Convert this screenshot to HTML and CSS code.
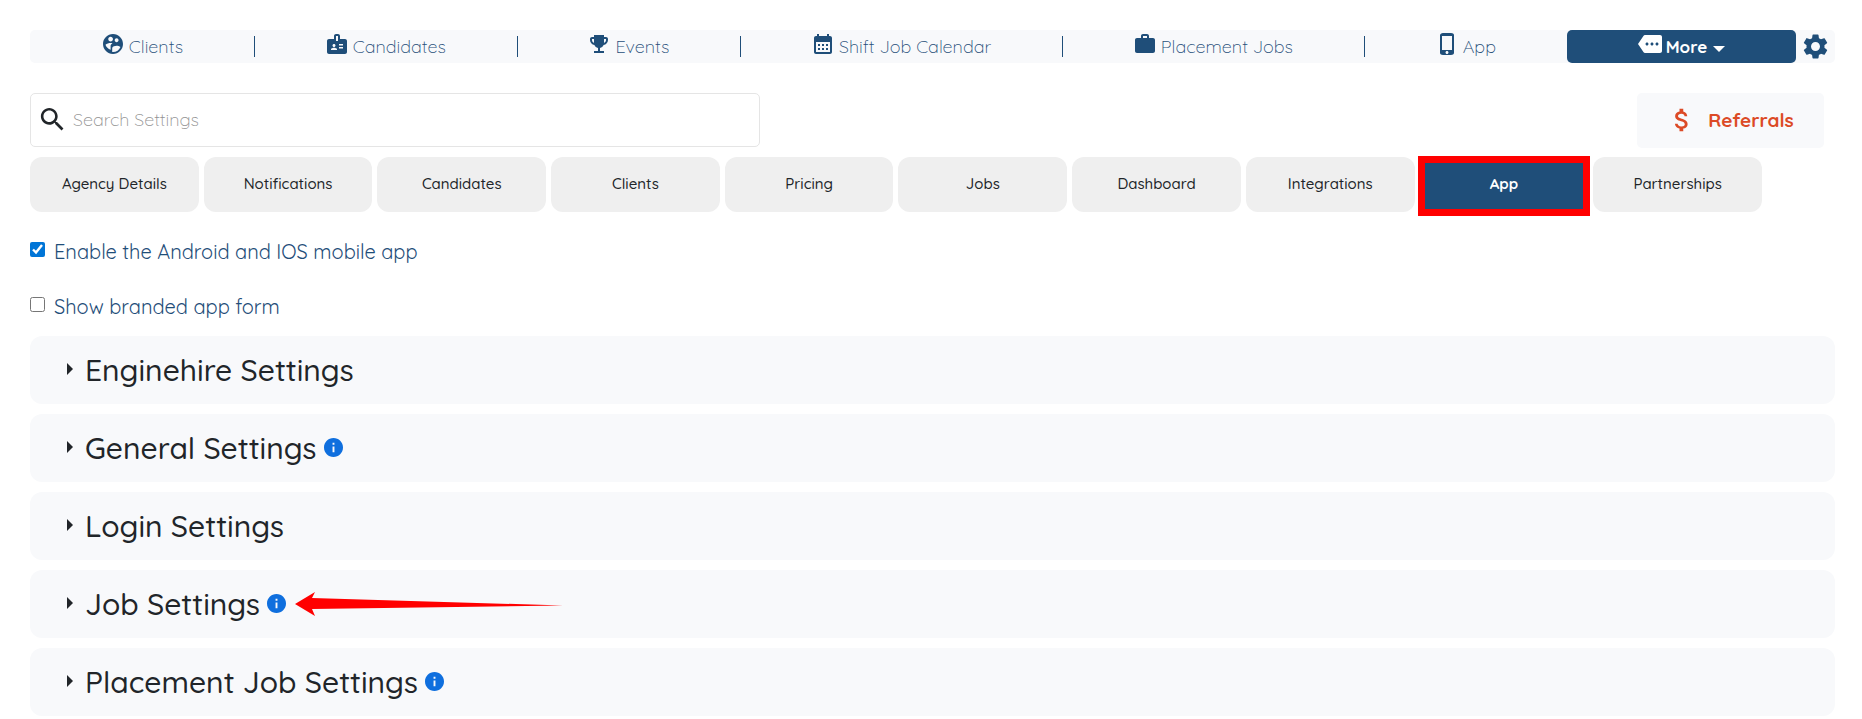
FILE: index.html
```html
<!DOCTYPE html>
<html lang="en">
<head>
<meta charset="utf-8">
<title>Settings</title>
<link rel="stylesheet" href="styles.css">
</head>
<body>

<nav class="navbar">
  <a class="nav-item" href="#clients">
    <svg class="icon" viewBox="0 0 24 24"><path d="M12 2C6.480 2 2 6.480 2 12s4.480 10 10 10 10-4.480 10-10S17.520 2 12 2zm3.610 4.340c1.070 0 1.930.86 1.930 1.930 0 1.070-.86 1.930-1.930 1.930-1.070 0-1.930-.86-1.930-1.930-.01-1.070.86-1.930 1.930-1.930zm-6-1.580c1.300 0 2.360 1.060 2.360 2.360 0 1.300-1.060 2.360-2.360 2.360s-2.360-1.060-2.360-2.360c0-1.310 1.050-2.360 2.360-2.360zm0 9.130v3.750c-2.400-.75-4.300-2.600-5.140-4.960 1.050-1.120 3.670-1.690 5.140-1.690.53 0 1.200.08 1.900.22-1.640.87-1.900 2.020-1.900 2.680zM12 20c-.27 0-.53-.01-.79-.04v-4.070c0-1.420 2.940-2.130 4.400-2.130 1.070 0 2.920.39 3.840 1.150C18.280 17.880 15.390 20 12 20z"/></svg>
    <span>Clients</span>
  </a>
  <a class="nav-item" href="#candidates">
    <svg class="icon" viewBox="0 0 24 24"><path fill-rule="evenodd" d="M20 7h-5V4c0-1.100-.9-2-2-2h-2c-1.100 0-2 .9-2 2v3H4c-1.100 0-2 .9-2 2v11c0 1.100.9 2 2 2h16c1.100 0 2-.9 2-2V9c0-1.100-.9-2-2-2zM9 12c.83 0 1.500.67 1.500 1.500S9.830 15 9 15s-1.500-.67-1.500-1.500S8.170 12 9 12zm3 6H6v-.75c0-1 2-1.500 3-1.500s3 .5 3 1.500V18zm1-9h-2V4h2v5zm5 7.500h-4V15h4v1.500zm0-3h-4V12h4v1.500z"/></svg>
    <span>Candidates</span>
  </a>
  <a class="nav-item" href="#events">
    <svg class="icon" viewBox="0 0 24 24"><path fill-rule="evenodd" d="M19 5h-2V3H7v2H5c-1.100 0-2 .9-2 2v1c0 2.550 1.920 4.630 4.390 4.940.63 1.500 1.980 2.630 3.610 2.960V19H7v2h10v-2h-4v-3.100c1.630-.33 2.980-1.460 3.610-2.960C19.080 12.630 21 10.550 21 8V7c0-1.100-.9-2-2-2zM5 8V7h2v3.820C5.840 10.400 5 9.300 5 8zm14 0c0 1.300-.84 2.400-2 2.820V7h2v1z"/></svg>
    <span>Events</span>
  </a>
  <a class="nav-item" href="#calendar">
    <svg class="icon" viewBox="0 0 24 24"><path fill-rule="evenodd" d="M19 4h-1V2h-2v2H8V2H6v2H5c-1.110 0-2 .9-2 2v14c0 1.100.89 2 2 2h14c1.100 0 2-.9 2-2V6c0-1.100-.9-2-2-2zm0 16H5V10h14v10zM9 14H7v-2h2v2zm4 0h-2v-2h2v2zm4 0h-2v-2h2v2zm-8 4H7v-2h2v2zm4 0h-2v-2h2v2zm4 0h-2v-2h2v2z"/></svg>
    <span>Shift Job Calendar</span>
  </a>
  <a class="nav-item" href="#placement">
    <svg class="icon" viewBox="0 0 24 24"><path fill-rule="evenodd" d="M20 6h-4V4c0-1.110-.89-2-2-2h-4c-1.110 0-2 .89-2 2v2H4c-1.110 0-2 .89-2 2v11c0 1.110.89 2 2 2h16c1.110 0 2-.89 2-2V8c0-1.110-.89-2-2-2zm-6 0h-4V4h4v2z"/></svg>
    <span>Placement Jobs</span>
  </a>
  <a class="nav-item" href="#app">
    <svg class="icon" viewBox="0 0 24 24"><path fill-rule="evenodd" d="M16 1H8C6.340 1 5 2.340 5 3v18c0 1.100 1.340 2 3 2h8c1.660 0 3-.9 3-2V3c0-1.100-1.340-2-3-2zm-4 21c-.83 0-1.500-.67-1.500-1.500S11.170 19 12 19s1.500.67 1.500 1.500S12.830 22 12 22zm5-4H7V4h10v14z"/></svg>
    <span>App</span>
  </a>
  <button class="nav-item nav-more" type="button">
    <svg class="icon" viewBox="0 0 24 24"><path fill-rule="evenodd" d="M22 3H7c-.69 0-1.230.35-1.590.88L0 12l5.410 8.110c.36.53.97.89 1.660.89H22c1.100 0 2-.9 2-2V5c0-1.100-.9-2-2-2zM9 13.500c-.83 0-1.500-.67-1.500-1.500s.67-1.500 1.500-1.500 1.500.67 1.500 1.500-.67 1.500-1.500 1.500zm5 0c-.83 0-1.500-.67-1.500-1.500s.67-1.500 1.500-1.500 1.500.67 1.500 1.500-.67 1.500-1.500 1.500zm5 0c-.83 0-1.500-.67-1.500-1.500s.67-1.500 1.500-1.500 1.500.67 1.500 1.500-.67 1.500-1.500 1.500z"/></svg>
    <span>More</span>
    <span class="caret"></span>
  </button>
  <a class="nav-gear" href="#settings" aria-label="Settings">
    <svg viewBox="2 2 20 20"><path d="M19.140 12.940c.04-.3.060-.61.060-.94 0-.32-.02-.64-.07-.94l2.030-1.580c.18-.14.230-.41.120-.61l-1.920-3.320c-.12-.22-.37-.29-.59-.22l-2.390.96c-.5-.38-1.030-.7-1.620-.94l-.36-2.540c-.04-.24-.24-.41-.48-.41h-3.840c-.24 0-.43.17-.47.41l-.36 2.540c-.59.24-1.130.57-1.620.94l-2.390-.96c-.22-.08-.47 0-.59.22L2.740 8.870c-.12.210-.08.470.12.610l2.030 1.580c-.05.3-.09.630-.09.94s.02.640.07.940l-2.030 1.580c-.18.140-.23.410-.12.610l1.920 3.320c.12.220.37.290.59.220l2.390-.96c.5.380 1.030.7 1.620.94l.36 2.540c.05.240.24.410.48.410h3.840c.24 0 .44-.17.470-.41l.36-2.540c.59-.24 1.130-.56 1.620-.94l2.390.96c.22.080.47 0 .59-.22l1.920-3.320c.12-.22.070-.47-.12-.61l-2.010-1.580zM12 15.600c-1.980 0-3.600-1.620-3.600-3.600s1.620-3.600 3.600-3.600 3.600 1.620 3.600 3.600-1.620 3.600-3.600 3.600z"/></svg>
  </a>
</nav>

<div class="toolbar">
  <div class="search">
    <svg class="search-icon" viewBox="0 0 24 24"><path d="M15.500 14h-.79l-.28-.27C15.410 12.590 16 11.110 16 9.500 16 5.910 13.090 3 9.500 3S3 5.910 3 9.500 5.910 16 9.500 16c1.610 0 3.090-.59 4.230-1.570l.27.28v.79l5 4.990L20.490 19l-4.990-5zm-6 0C7.010 14 5 11.990 5 9.500S7.010 5 9.500 5 14 7.010 14 9.500 11.990 14 9.500 14z"/></svg>
    <input class="search-input" type="text" placeholder="Search Settings" aria-label="Search Settings">
  </div>
  <a class="referrals" href="#referrals">
    <svg class="dollar" viewBox="0 0 24 24"><path d="M11.800 10.900c-2.270-.59-3-1.200-3-2.150 0-1.090 1.010-1.850 2.700-1.850 1.780 0 2.440.85 2.500 2.100h2.210c-.07-1.720-1.120-3.300-3.210-3.810V3h-3v2.160c-1.940.42-3.500 1.680-3.500 3.610 0 2.310 1.910 3.460 4.700 4.130 2.500.6 3 1.480 3 2.410 0 .69-.49 1.790-2.700 1.790-2.060 0-2.870-.92-2.980-2.100h-2.200c.12 2.190 1.760 3.420 3.680 3.830V21h3v-2.150c1.950-.37 3.500-1.500 3.500-3.550 0-2.840-2.430-3.810-4.700-4.400z"/></svg>
    <span>Referrals</span>
  </a>
</div>

<div class="tabs">
  <button class="tab" type="button">Agency Details</button>
  <button class="tab" type="button">Notifications</button>
  <button class="tab" type="button">Candidates</button>
  <button class="tab" type="button">Clients</button>
  <button class="tab" type="button">Pricing</button>
  <button class="tab" type="button">Jobs</button>
  <button class="tab" type="button">Dashboard</button>
  <button class="tab" type="button">Integrations</button>
  <button class="tab active" type="button">App</button>
  <button class="tab" type="button">Partnerships</button>
</div>

<div class="options">
  <div class="option">
    <input type="checkbox" id="enable-app" checked>
    <label for="enable-app">Enable the Android and IOS mobile app</label>
  </div>
  <div class="option">
    <input type="checkbox" id="branded-form">
    <label for="branded-form">Show branded app form</label>
  </div>
</div>

<div class="panels">
  <details class="panel">
    <summary><span class="title">Enginehire Settings</span></summary>
  </details>
  <details class="panel">
    <summary>
      <span class="title">General Settings</span>
      <svg class="info" viewBox="2 2 20 20"><path d="M12 2C6.480 2 2 6.480 2 12s4.480 10 10 10 10-4.480 10-10S17.520 2 12 2zm1 15h-2v-6h2v6zm0-8h-2V7h2v2z"/></svg>
    </summary>
  </details>
  <details class="panel">
    <summary><span class="title">Login Settings</span></summary>
  </details>
  <details class="panel">
    <summary>
      <span class="title">Job Settings</span>
      <svg class="info" viewBox="2 2 20 20"><path d="M12 2C6.480 2 2 6.480 2 12s4.480 10 10 10 10-4.480 10-10S17.520 2 12 2zm1 15h-2v-6h2v6zm0-8h-2V7h2v2z"/></svg>
      <svg class="pointer" viewBox="0 0 268 24"><path d="M0 12 20 0 17 6 268 13.500 17 17 20 24z"/></svg>
    </summary>
  </details>
  <details class="panel">
    <summary>
      <span class="title">Placement Job Settings</span>
      <svg class="info" viewBox="2 2 20 20"><path d="M12 2C6.480 2 2 6.480 2 12s4.480 10 10 10 10-4.480 10-10S17.520 2 12 2zm1 15h-2v-6h2v6zm0-8h-2V7h2v2z"/></svg>
    </summary>
  </details>
</div>

</body>
</html>
```
FILE: styles.css
```css
* { box-sizing: border-box; }
body {
  margin: 0;
  padding: 30px 27px 0 30px;
  background: #fff;
  color: #212529;
  font-family: Quicksand, Lato, "Open Sans", sans-serif;
  font-size: 18px;
}
a { text-decoration: none; }
svg { flex: none; fill: currentColor; }
button { border: 0; font-family: inherit; cursor: pointer; }

/* top navigation */
.navbar {
  display: flex;
  height: 33px;
  background: #f8f9fb;
  border-radius: 5px;
}
.nav-item {
  position: relative;
  flex: 1 1 auto;
  display: flex;
  justify-content: center;
  align-items: center;
  gap: 4px;
  padding: 0;
  color: #1f4e79;
  font-size: 18px;
  font-weight: 300;
  line-height: 24px;
  white-space: nowrap;
}
.nav-item .icon {
  width: 24px;
  height: 24px;
  margin-bottom: 6px;
}
.nav-item + a.nav-item::before {
  content: "";
  position: absolute;
  left: 0;
  top: 6px;
  height: 21px;
  border-left: 1px solid #1f4e79;
}
.nav-more {
  background: #1f4e79;
  border-radius: 5px;
  color: #fff;
  font-size: 17px;
  font-weight: 700;
}
.caret {
  margin: 4px 0 0 2px;
  border: 6px solid transparent;
  border-top-color: #fff;
  border-bottom: 0;
}
.nav-gear {
  display: flex;
  align-items: center;
  padding: 0 7px 1px;
  color: #1f4e79;
}
.nav-gear svg { width: 25px; height: 25px; }

/* search and referrals */
.toolbar {
  display: flex;
  justify-content: space-between;
  margin: 30px 11px 0 0;
}
.search {
  display: flex;
  align-items: center;
  width: 40.7%;
  height: 54px;
  padding: 0 8px 1px 6px;
  border: 1px solid #e5e5e5;
  border-radius: 5px;
}
.search-icon { width: 31px; height: 31px; }
.search-input {
  flex: 1;
  padding: 0 5px;
  border: 0;
  outline: 0;
  background: none;
  color: #212529;
  font: inherit;
  font-weight: 300;
}
.search-input::placeholder { color: #929292; }
.referrals {
  display: flex;
  justify-content: center;
  align-items: center;
  gap: 11px;
  width: 187px;
  height: 55px;
  padding-bottom: 2px;
  background: #f8f9fb;
  border-radius: 5px;
  color: #dc4a26;
  font-size: 19px;
  font-weight: 700;
}
.dollar { width: 30px; height: 30px; }

/* tabs */
.tabs {
  display: grid;
  grid-template-columns: repeat(10, 1fr);
  gap: 5px;
  margin: 9px 73px 0 0;
}
.tab {
  position: relative;
  height: 55px;
  padding: 0 0 3px;
  background: #efefef;
  border-radius: 12px;
  color: #212529;
  font-size: 15px;
  font-weight: 500;
}
.tab.active { background: #1f4e79; color: #fff; font-weight: 700; }
.tab.active::after {
  content: "";
  position: absolute;
  inset: -1px -2px -4px;
  border: 7px solid #f00;
}

/* app options */
.options { margin-top: 24px; }
.option {
  display: flex;
  align-items: center;
  gap: 9px;
  height: 30px;
  margin-bottom: 25px;
  color: #1f4e79;
  font-size: 20px;
  font-weight: 400;
}
.option input { width: 15px; height: 15px; margin: 0 0 4px; accent-color: #0075d7; }

/* collapsible groups */
.panels { display: grid; gap: 10px; margin-top: -10px; }
.panel { background: #f8f9fb; border-radius: 12px; }
.panel summary {
  display: flex;
  align-items: center;
  height: 68px;
  padding-left: 37px;
  font-size: 30px;
  font-weight: 500;
  list-style: none;
  cursor: pointer;
}
.panel summary::before {
  content: "";
  margin: 0 12px 2px 0;
  border: 6px solid transparent;
  border-left-color: #212529;
  border-right: 0;
}
.info { width: 19px; height: 19px; margin: 0 0 2px 7px; fill: #0f6fde; }
.pointer { width: 268px; height: 24px; margin-left: 9px; fill: #f00; }
```
